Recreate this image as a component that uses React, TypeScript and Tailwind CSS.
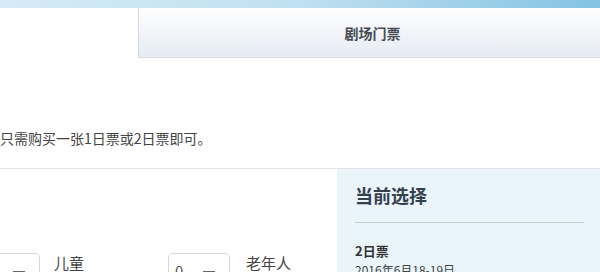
import React from "react";

const font = { fontFamily: '"Noto Sans CJK SC", "Noto Sans", sans-serif' };

function Select({ value, className }: { value?: string; className: string }) {
  return (
    <div
      className={`relative h-[34px] shrink-0 rounded-[5px] border border-[#d6d6d6] bg-white ${className}`}
    >
      {value && (
        <span className="absolute left-[6px] top-[7px] text-[15px] leading-[20px] text-[#555]">{value}</span>
      )}
      <span className="absolute right-[14px] top-[17px] h-[1px] w-[12px] bg-[#666]" />
    </div>
  );
}

export default function App() {
  return (
    <div className="relative h-[272px] w-[600px] overflow-hidden bg-white" style={font}>
      <div className="h-[8px] bg-gradient-to-r from-[#d6ebf6] via-[#bfe0f1] to-[#84c3e3]" />
      <div className="flex h-[50px]">
        <div className="w-[138px] bg-white" />
        <div className="flex flex-1 items-center justify-center border-b border-l border-[#d4d8df] bg-gradient-to-b from-[#fefefe] to-[#e6ebf4] pl-[6px]">
          <span className="text-[14px] font-bold leading-[20px] text-[#454a52]">剧场门票</span>
        </div>
      </div>
      <p className="mt-[70px] text-[14px] leading-[20px] text-[#444]">只需购买一张1日票或2日票即可。</p>
      <div className="mt-[20px] border-t border-[#e4e4e4]" />
      <div className="flex h-[120px]">
        <div className="flex flex-1 items-start pt-[84px]">
          <Select className="ml-[-30px] w-[70px]" />
          <span className="ml-[14px] text-[15px] leading-[20px] text-[#444]">儿童</span>
          <Select value="0" className="ml-[84px] w-[62px]" />
          <span className="ml-[16px] text-[15px] leading-[20px] text-[#444]">老年人</span>
        </div>
        <div className="w-[263px] bg-[#eaf4fb] pl-[18px] pr-[16px] pt-[14px]">
          <div className="text-[18px] font-bold leading-[24px] text-[#35404d]">当前选择</div>
          <div className="mt-[15px] border-t border-[#c3ccd5]" />
          <div className="mt-[19px] text-[13px] font-bold leading-[18px] text-[#333]">2日票</div>
          <div className="mt-[2px] text-[12px] leading-[16px] text-[#444]">2016年6月18-19日</div>
        </div>
      </div>
    </div>
  );
}
